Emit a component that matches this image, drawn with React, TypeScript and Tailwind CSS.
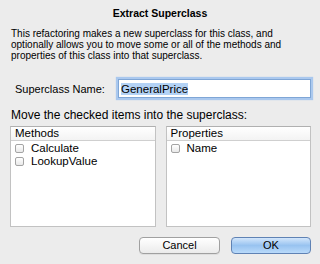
import { useState } from "react";

type Item = { name: string; checked: boolean };

function CheckList({ title, items }: { title: string; items: Item[] }) {
    const [rows, setRows] = useState(items);

    return (
        <div className="flex-1 h-[101px] bg-white border border-[#c2c2c2] border-t-[#b0b0b0] flex flex-col overflow-hidden">
            <div className="h-[14px] pl-[4px] border-b border-[#cfcfcf] bg-gradient-to-b from-white to-[#f3f3f3] text-[11.5px] leading-[13px]">
                {title}
            </div>
            <div className="flex flex-col pt-[1px]">
                {rows.map((row, i) => (
                    <label key={row.name} className="h-[13px] flex items-center gap-[7px] pl-[4px] text-[11.5px] leading-[13px]">
                        <input
                            type="checkbox"
                            checked={row.checked}
                            onChange={() => setRows(rows.map((r, j) => (j === i ? { ...r, checked: !r.checked } : r)))}
                            className="appearance-none w-[9px] h-[9px] rounded-[2px] border border-[#a4a4a4] bg-gradient-to-b from-white to-[#e9e9e9] shrink-0"
                        />
                        {row.name}
                    </label>
                ))}
            </div>
        </div>
    );
}

export default function App() {
    return (
        <div
            className="w-[320px] h-[264px] bg-[#ececec] text-black flex flex-col overflow-hidden"
            style={{ fontFamily: '"Liberation Sans", Arial, sans-serif' }}
        >
            <div className="pt-[6px] text-center text-[10.5px] leading-[14px] font-bold">Extract Superclass</div>

            <p className="mt-[8px] px-[11px] text-[10px] leading-[11px]">
                This refactoring makes a new superclass for this class, and optionally allows you to move some or all of the
                methods and properties of this class into that superclass.
            </p>

            <div className="mt-[18px] h-[19px] flex items-center">
                <span className="w-[118px] pl-[15px] text-[11px] leading-[14px]">Superclass Name:</span>
                <div className="w-[193px] h-[19px] bg-white border border-[#7fa6d6] shadow-[0_0_1px_2px_#aac8ee] flex items-center pl-[2px]">
                    <span className="bg-[#b3d2f5] text-[11.5px] leading-[12px]">GeneralPrice</span>
                </div>
            </div>

            <div className="mt-[10px] px-[11px] text-[12px] leading-[14px] whitespace-nowrap">
                Move the checked items into the superclass:
            </div>

            <div className="mt-[4px] pl-[10px] pr-[9px] flex gap-[10px]">
                <CheckList
                    title="Methods"
                    items={[
                        { name: "Calculate", checked: false },
                        { name: "LookupValue", checked: false },
                    ]}
                />
                <CheckList title="Properties" items={[{ name: "Name", checked: false }]} />
            </div>

            <div className="mt-[10px] pr-[9px] flex justify-end gap-[11px]">
                <button className="w-[81px] h-[17px] rounded-[4px] border border-[#a0a0a0] bg-gradient-to-b from-white to-[#ebebeb] text-[11px] leading-[15px] shadow-[0_1px_0_rgba(0,0,0,0.06)]">
                    Cancel
                </button>
                <button className="w-[80px] h-[17px] rounded-[4px] border border-[#5f82b4] bg-gradient-to-b from-[#d3e6fb] via-[#98c3f0] to-[#b9dafa] text-[11px] leading-[15px]">
                    OK
                </button>
            </div>
        </div>
    );
}
